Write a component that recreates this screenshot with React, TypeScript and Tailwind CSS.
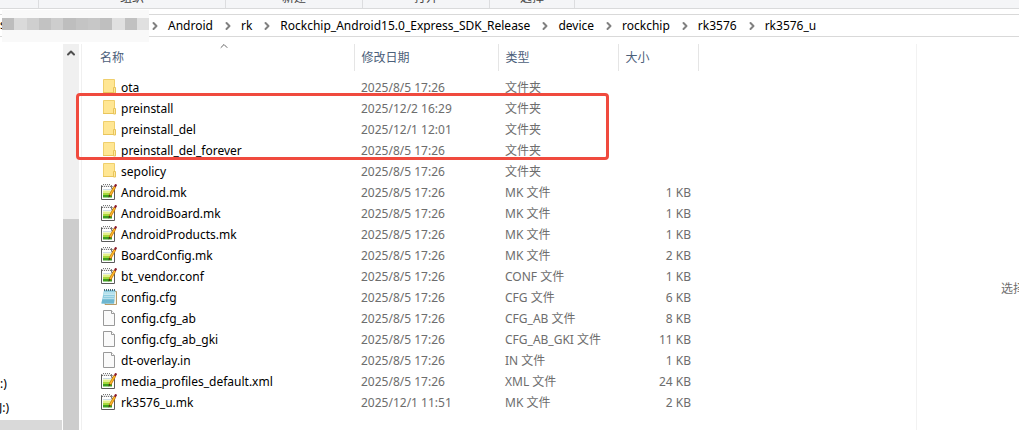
import { ChevronRight, ChevronUp } from "lucide-react";

type IconKind = "folder" | "editor" | "notepad" | "blank";

type FileEntry = {
  name: string;
  modified: string;
  type: string;
  size?: string;
  icon: IconKind;
};

const crumbs = [
  "Android",
  "rk",
  "Rockchip_Android15.0_Express_SDK_Release",
  "device",
  "rockchip",
  "rk3576",
  "rk3576_u",
];

const ribbonGroups = [
  { label: "", width: "w-[39px]" },
  { label: "组织", width: "w-[187px]" },
  { label: "新建", width: "w-[137px]" },
  { label: "打开", width: "w-[127px]" },
  { label: "选择", width: "w-[85px]" },
];

const files: FileEntry[] = [
  { name: "ota", modified: "2025/8/5 17:26", type: "文件夹", icon: "folder" },
  { name: "preinstall", modified: "2025/12/2 16:29", type: "文件夹", icon: "folder" },
  { name: "preinstall_del", modified: "2025/12/1 12:01", type: "文件夹", icon: "folder" },
  { name: "preinstall_del_forever", modified: "2025/8/5 17:26", type: "文件夹", icon: "folder" },
  { name: "sepolicy", modified: "2025/8/5 17:26", type: "文件夹", icon: "folder" },
  { name: "Android.mk", modified: "2025/8/5 17:26", type: "MK 文件", size: "1 KB", icon: "editor" },
  { name: "AndroidBoard.mk", modified: "2025/8/5 17:26", type: "MK 文件", size: "1 KB", icon: "editor" },
  { name: "AndroidProducts.mk", modified: "2025/8/5 17:26", type: "MK 文件", size: "1 KB", icon: "editor" },
  { name: "BoardConfig.mk", modified: "2025/8/5 17:26", type: "MK 文件", size: "2 KB", icon: "editor" },
  { name: "bt_vendor.conf", modified: "2025/8/5 17:26", type: "CONF 文件", size: "1 KB", icon: "editor" },
  { name: "config.cfg", modified: "2025/8/5 17:26", type: "CFG 文件", size: "6 KB", icon: "notepad" },
  { name: "config.cfg_ab", modified: "2025/8/5 17:26", type: "CFG_AB 文件", size: "8 KB", icon: "blank" },
  { name: "config.cfg_ab_gki", modified: "2025/8/5 17:26", type: "CFG_AB_GKI 文件", size: "11 KB", icon: "blank" },
  { name: "dt-overlay.in", modified: "2025/8/5 17:26", type: "IN 文件", size: "1 KB", icon: "blank" },
  { name: "media_profiles_default.xml", modified: "2025/8/5 17:26", type: "XML 文件", size: "24 KB", icon: "editor" },
  { name: "rk3576_u.mk", modified: "2025/12/1 11:51", type: "MK 文件", size: "2 KB", icon: "editor" },
];

const redactedTones = [
  "bg-[#bdbdbd]", "bg-[#dadada]", "bg-[#cfcfcf]", "bg-[#c2c2c2]",
  "bg-[#cdcdcd]", "bg-[#bebebe]", "bg-[#c4c4c4]", "bg-[#c7c7c7]",
  "bg-[#bfbfbf]", "bg-[#e0e0e0]", "bg-[#c1c1c1]", "bg-[#e0e0e0]",
];

function FileIcon({ kind }: { kind: IconKind }) {
  if (kind === "folder") {
    return (
      <svg className="size-4 shrink-0" viewBox="0 0 16 16" aria-hidden="true">
        <path d="M2.5.5h11v13h-11z" fill="#ffe693" stroke="#efcf6c" />
        <path d="M12.5 8.5h2V14h-2z" fill="#ffe9a2" stroke="#e8c45a" />
        <path d="M2 13.5h10" stroke="#e9c55c" />
      </svg>
    );
  }
  if (kind === "editor") {
    return (
      <svg className="size-4 shrink-0" viewBox="0 0 16 16" aria-hidden="true">
        <path d="M.5 1.5h10l3 3v11H.5z" fill="#fff" stroke="#5a5a5a" />
        <path d="M2 5.5h9" stroke="#cfdce6" />
        <path d="M2 6.5h9V9H2z" fill="#e3ef8c" />
        <path d="M2 9h9v2H2z" fill="#a5d83c" />
        <path d="M2 11h9v2.500H2z" fill="#3f9f1f" />
        <path d="M1 1h9v2H1z" fill="#e8e8e8" />
        <path d="M2 .5h8M1 2.500h9" stroke="#777" strokeDasharray="1 1" />
        <path d="M10.500 1.500v3h3" fill="#eee" stroke="#777" />
        <path d="M14 2.500 9 11.500" stroke="#c77a10" strokeWidth="2.600" />
        <path d="M14 2.500 9.200 11" stroke="#ffbe2e" strokeWidth="1.300" />
        <path d="m13.800 2.800 1.400-2.400" stroke="#8c1e2c" strokeWidth="2.200" />
        <path d="m8 10.800 1.800 1L7.500 13.500z" fill="#493414" />
      </svg>
    );
  }
  if (kind === "notepad") {
    return (
      <svg className="size-4 shrink-0" viewBox="0 0 16 16" aria-hidden="true">
        <path d="M5 2.500h10.500v13H4z" fill="#f8f3e5" stroke="#b79a67" />
        <path d="M3 1h11.500L13 14.500H.5z" fill="#8fcde0" />
        <path d="M2.800 3h11.400L14 6H2.300z" fill="#b6e1ec" />
        <path d="M1.200 10.500h12.200L13 14.500H.5z" fill="#6db6d0" />
        <path d="M3 5.500h10M3 7.500h10M2 9.500h11" stroke="#d2edf4" strokeWidth=".6" />
        <path d="M3 1h11" stroke="#4a6a78" strokeWidth="2" strokeDasharray="1 1" />
      </svg>
    );
  }
  return (
    <svg className="size-4 shrink-0" viewBox="0 0 16 16" aria-hidden="true">
      <path d="M2.500.5h8l3 3v12h-11z" fill="#fafafa" stroke="#999" />
      <path d="M10.500.5v3h3" fill="#fff" stroke="#999" />
    </svg>
  );
}

function Ribbon() {
  return (
    <div className="flex h-[9px] items-end overflow-hidden border-b border-[#d9dadb] bg-[#f4f5f7] text-[#444]">
      {ribbonGroups.map((group) => (
        <div
          key={group.width}
          className={`${group.width} flex h-[18px] shrink-0 justify-center border-r border-[#dcdddf] leading-4`}
        >
          {group.label}
        </div>
      ))}
    </div>
  );
}

function AddressBar() {
  return (
    <nav
      aria-label="地址"
      className="mt-[5px] flex h-[23px] items-center border-y border-[#d9d9d9] text-black"
    >
      <div className="relative h-full w-[149px] shrink-0">
        <span className="leading-5">s</span>
        <div className="absolute top-[-5px] right-0 left-[2px] flex h-8 items-start bg-[#f9f9f9] pt-2">
          {redactedTones.map((tone, i) => (
            <span key={i} className={`${tone} h-3 flex-1`} />
          ))}
        </div>
      </div>
      {crumbs.map((crumb) => (
        <div key={crumb} className="mr-[9px] flex shrink-0 items-center leading-5">
          <ChevronRight className="mr-[7px] size-3 text-[#808080]" strokeWidth={4} />
          <a href="#">{crumb}</a>
        </div>
      ))}
    </nav>
  );
}

function NavPane() {
  return (
    <aside className="flex w-[79px] shrink-0">
      <div className="flex flex-1 flex-col justify-end overflow-hidden text-black">
        <div className="h-6 leading-6">:)</div>
        <div className="flex h-6 w-[9px] justify-end leading-6">J:)</div>
        <div className="mr-[1px] h-[10px] bg-[#d9d9d9]" />
      </div>
      <div className="flex w-4 flex-col items-center bg-[#f0f0f0]">
        <ChevronUp className="mt-[3px] size-3 text-[#505050]" strokeWidth={4} />
        <div className="mt-auto h-[211px] w-full bg-[#cdcdcd]" />
      </div>
    </aside>
  );
}

function FileTable() {
  return (
    <table className="w-[616px] shrink-0 table-fixed border-collapse self-start text-left">
      <colgroup>
        <col className="w-[272px]" />
        <col className="w-36" />
        <col className="w-[120px]" />
        <col className="w-20" />
      </colgroup>
      <thead className="text-[#4c607a]">
        <tr className="h-[27px]">
          <th className="relative border-r border-[#e5e5e5] pl-[18px] font-normal">
            名称
            <ChevronUp className="absolute top-[-4px] left-[136px] size-3 text-[#666]" />
          </th>
          <th className="border-r border-[#e5e5e5] pl-[7px] font-normal">修改日期</th>
          <th className="border-r border-[#e5e5e5] pl-[7px] font-normal">类型</th>
          <th className="border-r border-[#e5e5e5] pl-[7px] font-normal">大小</th>
        </tr>
      </thead>
      <tbody className="text-[#6d6d6d]">
        <tr className="h-[6px]" aria-hidden="true" />
        {files.map((file) => (
          <tr key={file.name} className="h-[21px] align-top leading-[21px] whitespace-nowrap">
            <td className="pl-[19px] text-black">
              <div className="flex items-start gap-1">
                <span className="pt-[2px]">
                  <FileIcon kind={file.icon} />
                </span>
                {file.name}
              </div>
            </td>
            <td className="pl-[7px]">{file.modified}</td>
            <td className="pl-[7px]">{file.type}</td>
            <td className="pr-[7px] text-right">{file.size}</td>
          </tr>
        ))}
      </tbody>
    </table>
  );
}

export default function App() {
  return (
    <div className="flex h-screen flex-col overflow-hidden bg-white font-['Noto_Sans','Noto_Sans_CJK_SC',sans-serif] text-xs">
      <Ribbon />
      <AddressBar />
      <div className="mt-[7px] flex min-h-0 flex-1">
        <NavPane />
        <main className="relative ml-[2px] flex flex-1 border-l border-[#f0f0f0]">
          <FileTable />
          {/* highlight around the preinstall folders */}
          <div className="pointer-events-none absolute top-[49px] left-[-6px] h-[67px] w-[533px] rounded-sm border-3 border-[#f04a3e]" />
        </main>
        <aside className="flex w-[103px] shrink-0 items-center justify-end overflow-hidden border-l border-[#f2f2f2] text-[#6d6d6d]">
          <p className="w-[18px] pt-[103px] whitespace-nowrap">选择要预览的文件。</p>
        </aside>
      </div>
    </div>
  );
}
